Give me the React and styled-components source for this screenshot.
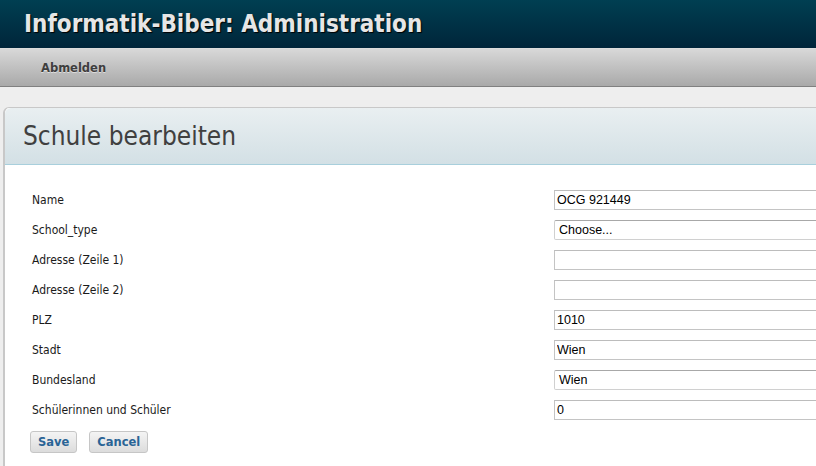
import styled, { createGlobalStyle } from "styled-components";

const GlobalStyle = createGlobalStyle`
  html, body {
    margin: 0;
    padding: 0;
    background: #eeeeee;
    overflow: hidden;
  }
  body {
    font-family: "DejaVu Sans", Verdana, sans-serif;
  }
`

const fields = [
  { label: "Name", value: "OCG 921449" },
  { label: "School_type", value: "Choose...", select: true },
  { label: "Adresse (Zeile 1)", value: "" },
  { label: "Adresse (Zeile 2)", value: "" },
  { label: "PLZ", value: "1010" },
  { label: "Stadt", value: "Wien" },
  { label: "Bundesland", value: "Wien", select: true },
  { label: "Schülerinnen und Schüler", value: "0" },
]

function App() {
  return (
    <Page>
      <GlobalStyle />
      <Header>
        <SiteTitle>Informatik-Biber: Administration</SiteTitle>
      </Header>
      <Nav>
        <NavLink href="#">Abmelden</NavLink>
      </Nav>
      <Content>
        <Panel>
          <PanelHeader>
            <PanelTitle>Schule bearbeiten</PanelTitle>
          </PanelHeader>
          <Form>
            {fields.map((f) => (
              <Row key={f.label}>
                <Label>{f.label}</Label>
                {f.select ? (
                  <Select>{f.value}</Select>
                ) : (
                  <Input defaultValue={f.value} />
                )}
              </Row>
            ))}
            <Buttons>
              <Button>Save</Button>
              <Button>Cancel</Button>
            </Buttons>
          </Form>
        </Panel>
      </Content>
    </Page>
  )
}

export default App

const Page = styled.div`
  width: 816px;
  height: 466px;
  overflow: hidden;
`
const Header = styled.div`
  height: 48px;
  padding-left: 24px;
  display: flex;
  align-items: center;
  background: linear-gradient(#003f52, #00253a);
  border-bottom: 1px solid #dcdcdc;
`
const SiteTitle = styled.h1`
  margin: 0;
  font-family: "DejaVu Sans Condensed", Tahoma, sans-serif;
  font-size: 24px;
  font-weight: bold;
  color: #e6e6e6;
  text-shadow: 1px 1px 1px #000;
`
const Nav = styled.div`
  height: 37px;
  padding-left: 41px;
  display: flex;
  align-items: center;
  background: linear-gradient(#d8d8d8, #a9a9a9);
  border-bottom: 1px solid #808080;
`
const NavLink = styled.a`
  font-size: 11.5px;
  font-weight: bold;
  color: #3e3e3e;
  text-decoration: none;
  text-shadow: 0 1px 0 #ddd;
`
const Content = styled.div`
  padding: 20px 0 0 3px;
`
const Panel = styled.div`
  width: 900px;
  height: 400px;
  background: #fff;
  border: 1px solid #c8c8c8;
  border-left-width: 2px;
  border-radius: 6px 0 0 0;
`
const PanelHeader = styled.div`
  height: 56px;
  padding-left: 18px;
  display: flex;
  align-items: center;
  background: linear-gradient(#e9eff1, #d3e0e5);
  border-bottom: 1px solid #a8cfdc;
  border-radius: 6px 0 0 0;
`
const PanelTitle = styled.h2`
  margin: 0;
  font-family: "DejaVu Sans Condensed", Tahoma, sans-serif;
  font-size: 26px;
  font-weight: normal;
  color: #404040;
`
const Form = styled.div`
  padding: 20px 0 0 27px;
`
const Row = styled.div`
  display: grid;
  grid-template-columns: 522px 300px;
  align-items: center;
  height: 30px;
`
const Label = styled.label`
  font-family: "DejaVu Sans Condensed", Tahoma, sans-serif;
  font-size: 12px;
  color: #1a1a1a;
`
const Input = styled.input`
  box-sizing: border-box;
  height: 20px;
  width: 300px;
  margin: 0;
  padding: 0 2px;
  border: 1px solid #c4c4c4;
  border-top-color: #bcbcbc;
  font-family: "Liberation Sans", Arial, sans-serif;
  font-size: 12.5px;
  color: #000;
  outline: none;
`
const Select = styled.div`
  box-sizing: border-box;
  height: 20px;
  width: 300px;
  padding: 1px 4px;
  border: 1px solid #d0d0d0;
  border-top-color: #a8a8a8;
  border-radius: 2px;
  background: #fff;
  font-family: "Liberation Sans", Arial, sans-serif;
  font-size: 12.5px;
  line-height: 16px;
  color: #000;
`
const Buttons = styled.div`
  display: flex;
  gap: 12px;
  margin: 6px 0 0 -2px;
`
const Button = styled.button`
  height: 22px;
  padding: 0 7px;
  background: linear-gradient(#f4f4f4, #dcdcdc);
  border: 1px solid #c6c6c6;
  border-radius: 3px;
  font-family: "DejaVu Sans", Verdana, sans-serif;
  font-size: 11.5px;
  font-weight: bold;
  color: #2a6496;
  cursor: pointer;
`
